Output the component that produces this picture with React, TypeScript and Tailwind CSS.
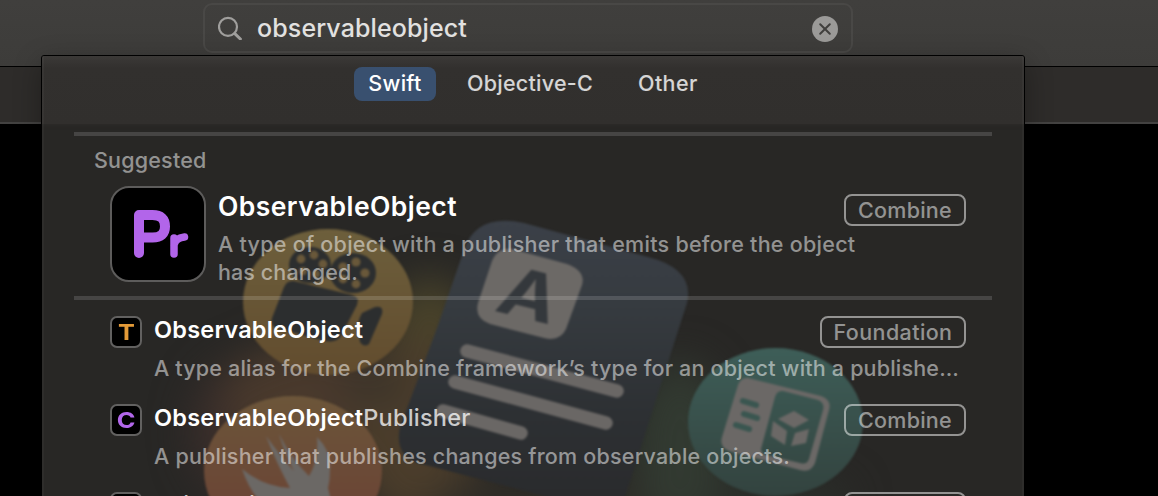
function SearchIcon() {
  return (
    <svg className="h-6 w-6 shrink-0" viewBox="0 0 24 24" fill="none" stroke="#a09f9d" strokeLinecap="round">
      <circle cx="10" cy="10.8" r="9" strokeWidth="2.2" />
      <path d="M16.8 17.6 L22.4 23" strokeWidth="3" />
    </svg>
  );
}

function ClearIcon() {
  return (
    <svg className="mt-0.5 h-[26px] w-[26px] shrink-0" viewBox="0 0 26 26" fill="none">
      <circle cx="13" cy="13" r="13" fill="#9b9a98" />
      <path d="M8.2 8.2 L17.8 17.8 M17.8 8.2 L8.2 17.8" stroke="#403f3d" strokeWidth="2" strokeLinecap="round" />
    </svg>
  );
}

function Artwork() {
  return (
    <svg className="absolute inset-0" width="982" height="440" viewBox="42 56 982 440" aria-hidden="true">
      <defs>
        <linearGradient id="gold" x1="0" y1="0" x2="0" y2="1">
          <stop offset="0" stopColor="#6d5f3c" />
          <stop offset="1" stopColor="#624c2e" />
        </linearGradient>
        <linearGradient id="orange" x1="0" y1="0" x2="0" y2="1">
          <stop offset="0" stopColor="#6c563a" />
          <stop offset="0.65" stopColor="#6b4736" />
          <stop offset="1" stopColor="#693f35" />
        </linearGradient>
        <linearGradient id="teal" x1="0" y1="0" x2="0" y2="1">
          <stop offset="0" stopColor="#3e5e58" />
          <stop offset="1" stopColor="#33433f" />
        </linearGradient>
        <linearGradient id="sheet" x1="0" y1="0" x2="0" y2="1">
          <stop offset="0" stopColor="#3b4048" />
          <stop offset="0.3" stopColor="#363b40" />
          <stop offset="0.7" stopColor="#2d3033" />
          <stop offset="1" stopColor="#2a2b2d" />
        </linearGradient>
        <filter id="glow" x="-60%" y="-60%" width="220%" height="220%" colorInterpolationFilters="sRGB">
          <feGaussianBlur stdDeviation="20" />
        </filter>
        <filter id="soft" x="-5%" y="-5%" width="110%" height="110%" colorInterpolationFilters="sRGB">
          <feGaussianBlur stdDeviation="1" />
        </filter>
      </defs>

      <g filter="url(#glow)">
        <ellipse cx="250" cy="430" rx="58" ry="70" fill="#3b2e2b" />
        <ellipse cx="310" cy="400" rx="85" ry="60" fill="#49392c" />
        <ellipse cx="430" cy="340" rx="45" ry="62" fill="#49432a" />
        <ellipse cx="415" cy="430" rx="65" ry="95" fill="#4b3d2b" />
        <ellipse cx="375" cy="388" rx="34" ry="16" fill="#37312a" />
        <ellipse cx="540" cy="505" rx="110" ry="28" fill="#302d27" />
        <ellipse cx="680" cy="450" rx="48" ry="90" fill="#323a31" />
        <ellipse cx="780" cy="500" rx="70" ry="22" fill="#2b302b" />
      </g>

      <g filter="url(#soft)">
        <ellipse cx="328" cy="302" rx="85" ry="73" fill="url(#gold)" />
        <g fill="#2c2e2f">
          <ellipse cx="310" cy="265" rx="21" ry="18" />
          <ellipse cx="353" cy="273" rx="23" ry="20" />
          <path d="M294 281 Q287 280 284 287 L272 318 Q270 326 277 328 L325 341 Q337 343 341 336 L357 305 Q360 297 352 295 Z" />
          <path d="M375 307 L362 313 Q358 320 358 328 L360 342 Q364 348 369 344 L382 314 Q384 305 375 307 Z" />
        </g>
        <g fill="#69583a">
          <circle cx="301" cy="259" r="4.4" />
          <circle cx="314" cy="255" r="4.4" />
          <circle cx="323" cy="264" r="4.4" />
          <circle cx="303" cy="271" r="4" />
          <circle cx="316" cy="274" r="3.8" />
          <circle cx="356" cy="262" r="4.6" />
          <circle cx="343" cy="267" r="4.6" />
          <circle cx="365" cy="273" r="4.6" />
          <circle cx="343" cy="279" r="4.4" />
          <circle cx="356" cy="284" r="4.4" />
        </g>

        <ellipse cx="293" cy="471" rx="89" ry="75" fill="url(#orange)" />
        <path
          fill="#6b6865"
          d="M242 469 Q264 487 290 488 Q276 462 266 436 Q282 458 294 471 Q284 452 279 434 Q292 460 309 476 Q319 460 317 437 Q332 452 330 470 Q330 480 328 488 L332 504 L262 504 Q249 490 242 469 Z"
        />

        <path
          fill="url(#sheet)"
          d="M524 223 L648 257 Q695 269 687 303 L678 331 L624 500 L560 500 L418 463 Q394 455 400 427 L437 328 L464 250 Q476 213 524 223 Z"
        />
        <path
          fill="#6c6966"
          d="M512 249 L567 264 Q586 271 582 285 L566 329 Q560 342 544 338 L490 324 Q474 318 478 303 L492 261 Q498 247 512 249 Z"
        />
        <text
          transform="translate(521.500 317.500) rotate(14) skewX(-7) scale(1.16 1)"
          textAnchor="middle"
          fill="#34383c"
          className="font-['Inter',sans-serif] text-[67px] font-bold"
        >
          A
        </text>
        <g stroke="#6a6765" strokeWidth="13.5" strokeLinecap="round">
          <path d="M467 351 L617 391" />
          <path d="M455 382 L606 423" />
          <path d="M443 411 L521 433" />
        </g>

        <ellipse cx="775.500" cy="422" rx="87.500" ry="74" fill="url(#teal)" />
        <path
          fill="#6b6866"
          fillRule="evenodd"
          d="M748 378 L821 396 Q832 400 829 410 L815 463 Q811 473 800 470 L729 451 Q719 447 722 437 L738 385 Q741 377 748 378 Z M783 391 Q777 390 775 397 L761 449 Q761 454 766 455 L800 463 Q807 465 809 459 L823 410 Q825 403 818 400 Z"
        />
        <g stroke="#3a5650" strokeWidth="6" strokeLinecap="round">
          <path d="M743 401 L756 405" />
          <path d="M744 414 L757 418" />
          <path d="M736 425 L749 429" />
        </g>
        <path
          fill="#6b6866"
          d="M778 419 L794 411 L809 420 L794 428 Z M773 421 L787 431 L785 445 L771 436 Z M795 433 L809 429 L806 443 L791 446 Z"
        />
      </g>
    </svg>
  );
}

function Badge({ label }: { label: string }) {
  return (
    <span
      className={
        "flex h-8 shrink-0 items-center justify-center rounded-lg border-2 border-white/50 text-[21.5px] leading-7 text-white/50 " +
        (label === "Foundation" ? "w-[146px] tracking-[0.4px]" : "w-[122px] tracking-[0.25px]")
      }
    >
      {label}
    </span>
  );
}

function KindIcon({ letter, color }: { letter: string; color: string }) {
  return (
    <span className="flex h-8 w-8 shrink-0 items-center justify-center rounded-[7px] border-2 border-[#626160] bg-black">
      <span className={"scale-x-115 text-[22px] leading-none font-bold " + color}>{letter}</span>
    </span>
  );
}

type Row = { letter: string; color: string; match: string; rest: string; desc: string; tracking: string; badge: string };

const rows: Row[] = [
  {
    letter: "T",
    color: "text-[#e39a38]",
    match: "ObservableObject",
    rest: "",
    desc: "A type alias for the Combine framework’s type for an object with a publishe…",
    tracking: "tracking-[0.19px]",
    badge: "Foundation",
  },
  {
    letter: "C",
    color: "text-[#b267ea]",
    match: "ObservableObject",
    rest: "Publisher",
    desc: "A publisher that publishes changes from observable objects.",
    tracking: "tracking-[0.22px]",
    badge: "Combine",
  },
  {
    letter: "P",
    color: "text-[#b267ea]",
    match: "",
    rest: "objectWillChange",
    desc: "",
    tracking: "",
    badge: "Combine",
  },
];

function ResultRow({ row }: { row: Row }) {
  return (
    <div className="flex h-[88px] pr-[58px] pl-[68px]">
      <KindIcon letter={row.letter} color={row.color} />
      <div className="ml-3 flex min-w-0 flex-1 flex-col">
        <div className="flex h-8 justify-between">
          <div
            className={
              "text-[23.5px] leading-8 tracking-[0.22px] whitespace-nowrap " + (row.match ? "-mt-0.5" : "-mt-[3px]")
            }
          >
            <span className="font-semibold text-white">{row.match}</span>
            <span className="font-medium text-white/75">{row.rest}</span>
          </div>
          <Badge label={row.badge} />
        </div>
        <p className={"mt-1.5 text-[21.5px] leading-7 whitespace-nowrap text-white/50 " + row.tracking}>{row.desc}</p>
      </div>
    </div>
  );
}

export default function App() {
  return (
    <div className="relative flex h-[496px] w-[1158px] flex-col overflow-hidden bg-black font-['Inter',sans-serif] font-[450]">
      <header className="flex h-[66px] shrink-0 bg-linear-to-b from-[#403f3d] to-[#3d3c3a] pt-[3px] pl-[203px]">
        <div className="flex h-[50px] w-[650px] items-center rounded-[9px] border-2 border-[#494846] pr-[13px] pl-[13px]">
          <SearchIcon />
          <span className="ml-[15px] flex-1 text-[25px] leading-8 tracking-[0.12px] text-[#e2e1e0]">observableobject</span>
          <ClearIcon />
        </div>
      </header>
      <div className="h-[58px] shrink-0 border-t border-b-2 border-t-black border-b-[#434241] bg-[#2e2c2a]" />

      <main className="absolute top-[55px] left-[41px] h-[480px] w-[984px] overflow-hidden rounded-t-[3px] border border-black bg-[#282725] shadow-[0_8px_28px_rgba(0,0,0,0.3)]">
        <div className="relative flex h-full flex-col">
          <nav className="flex h-[68px] shrink-0 items-start bg-linear-to-b from-[#3b3937] from-0% via-[#32302e] via-18% to-[#312f2d] pt-[11px] pl-[312px] text-[21.5px] leading-[34px] text-white/80 shadow-[0_0_4px_rgba(49,47,45,0.9)]">
            <span className="flex h-[34px] w-[82px] justify-center rounded-lg bg-[#39506f] leading-[33px] font-medium tracking-[0.3px] text-white">
              Swift
            </span>
            <span className="ml-[31px] w-[171px] leading-[33px] tracking-[0.25px]">Objective-C</span>
            <span className="leading-[33px] tracking-[0.4px]">Other</span>
          </nav>
          <Artwork />
          <section className="relative flex flex-col">
            <div className="mx-8 mt-2 h-1 bg-white/14" />
            <h2 className="mt-[10px] pl-[52px] text-[21.5px] leading-7 tracking-[0.2px] text-white/50">Suggested</h2>
            <div className="mt-3 flex h-24 pr-[58px] pl-[68px]">
              <div className="flex h-24 w-24 shrink-0 items-center justify-center rounded-[19px] border-2 border-[#5d5c5b] bg-black">
                <svg width="92" height="92" viewBox="112 188 92 92" fill="none" stroke="#b265ea" strokeLinecap="round" strokeLinejoin="round">
                  <path d="M139 253 V215 H152.500 Q165 215 165 226.500 Q165 237.500 152.500 237.500 H139" strokeWidth="10" />
                  <path d="M174 254 V238 M174 245 Q175.500 238 184.500 237" strokeWidth="7.500" />
                </svg>
              </div>
              <div className="ml-3 w-[626px]">
                <h3 className="mt-1 text-[26.5px] leading-8 font-semibold tracking-[0.43px] text-white">ObservableObject</h3>
                <p className="mt-2 text-[21.5px] leading-7 tracking-[0.27px] whitespace-nowrap text-white/50">
                  A type of object with a publisher that emits before the object
                  <br />
                  <span className="tracking-[0.1px]">has changed.</span>
                </p>
              </div>
              <div className="mt-2">
                <Badge label="Combine" />
              </div>
            </div>
            <div className="mx-8 mt-[14px] mb-4 h-1 bg-white/14" />
            {rows.map((row) => (
              <ResultRow key={row.rest + row.badge} row={row} />
            ))}
          </section>
          <div className="pointer-events-none absolute inset-0 border-x-2 border-white/3" />
        </div>
      </main>
    </div>
  );
}
